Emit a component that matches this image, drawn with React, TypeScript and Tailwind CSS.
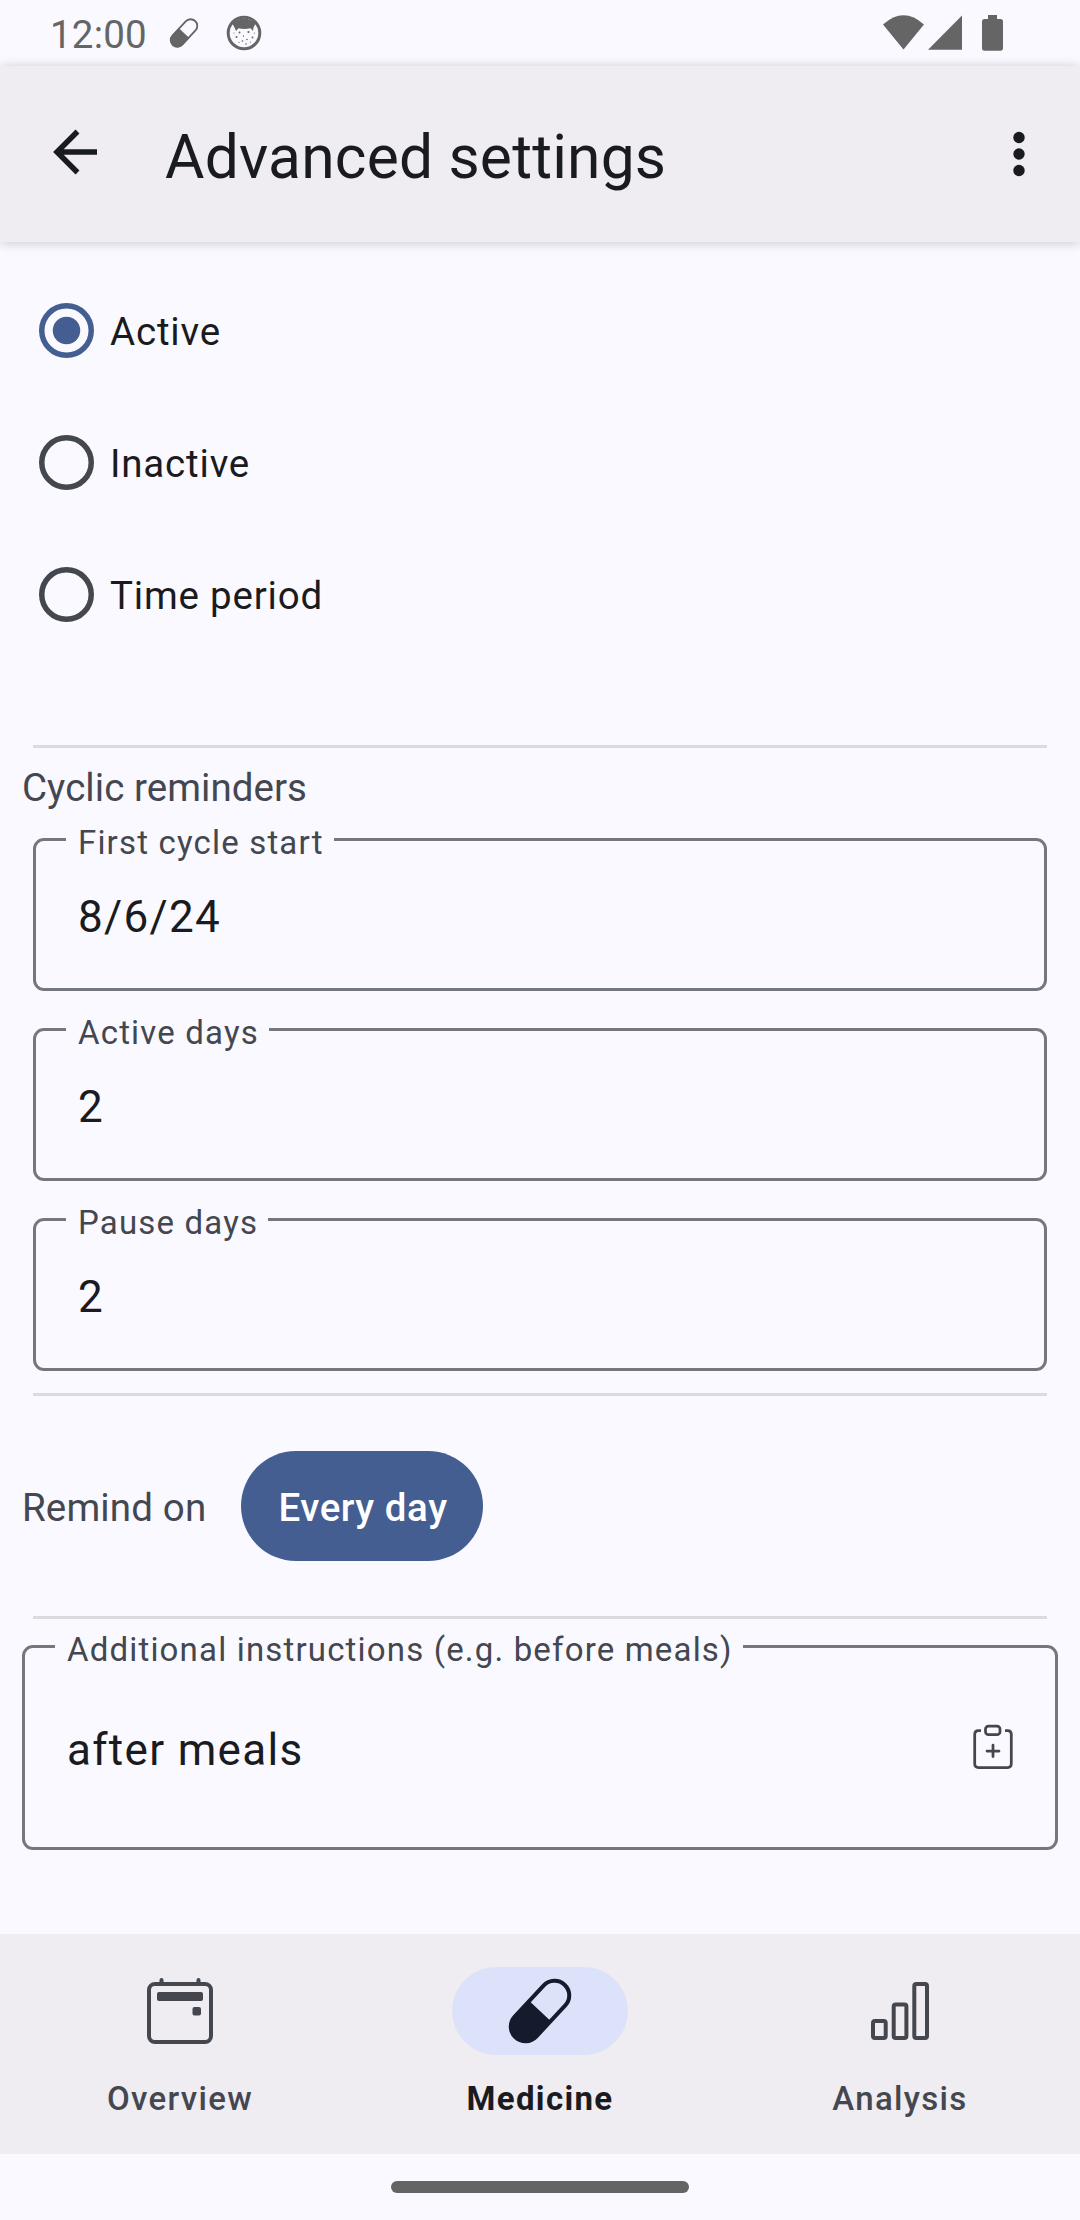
import type { ReactNode } from "react";

function PillIcon({ className }: { className: string }) {
  return (
    <svg viewBox="0 0 66 66" className={className} fill="none">
      <g transform="rotate(-47 33 33)">
        <rect x="-3" y="18.3" width="72" height="29.4" rx="14.7" stroke="currentColor" strokeWidth="4" />
        <path d="M33 17H12a16 16 0 0 0 0 32H33Z" fill="currentColor" />
      </g>
    </svg>
  );
}

function CatIcon() {
  return (
    <svg viewBox="0 0 36 36" className="h-9 w-9">
      <circle cx="18" cy="18" r="15.8" fill="none" stroke="#656565" strokeWidth="3" />
      <path d="M6 8Q17 -1 30 8L27.5 12.5 27 16 24.500 13.2Q18 14.800 12.500 13.200L10 16 8.500 12.500Z" fill="#656565" />
      <g fill="#656565">
        <circle cx="13.500" cy="17.500" r="1" />
        <circle cx="22.500" cy="17" r="1.100" />
        <circle cx="10.500" cy="22" r="1" />
        <circle cx="17.500" cy="21" r=".7" />
        <circle cx="26.500" cy="22.500" r=".9" />
        <circle cx="16.500" cy="26" r=".8" />
        <circle cx="21" cy="24.500" r=".8" />
        <circle cx="8" cy="18" r=".6" />
        <circle cx="28.500" cy="18" r=".6" />
        <circle cx="20" cy="29" r=".8" />
        <circle cx="13" cy="27.500" r=".6" />
        <circle cx="24.500" cy="27" r=".6" />
      </g>
    </svg>
  );
}

function StatusBar() {
  return (
    <div className="flex h-[66px] items-start text-[#656565]">
      <span className="ml-[50px] mt-3 w-[119px] text-[38.500px] leading-[45px] tracking-[0.005em]">12:00</span>
      <PillIcon className="mt-[18px] h-[30px] w-[30px]" />
      <div className="ml-[27px] mt-[15px]">
        <CatIcon />
      </div>
      <svg viewBox="0 0 130 40" className="ml-auto mr-[75px] mt-[14px] h-10 w-[130px]" fill="#656565">
        <path d="M8 10.500Q28.500 -8 49 10.500L28.500 35.500Z" />
        <path d="M53 35.800L87 1.500V35.800Z" />
        <path d="M113 1H122V5H125.500Q128 5 128 7.500V34Q128 36.700 125.500 36.700H109.500Q107 36.700 107 34V7.500Q107 5 109.500 5H113Z" />
      </svg>
    </div>
  );
}

function Radio({ label, checked = false }: { label: string; checked?: boolean }) {
  return (
    <div className="flex h-[132px] items-center">
      <svg viewBox="0 0 55 55" className={"h-[55px] w-[55px] " + (checked ? "text-[#445e91]" : "text-[#44474f]")}>
        <circle cx="27.5" cy="27.5" r="24.75" fill="none" stroke="currentColor" strokeWidth="5.5" />
        {checked && <circle cx="27.5" cy="27.5" r="13.75" fill="currentColor" />}
      </svg>
      <span className="ml-[16.500px] pt-[3px] text-[38.500px] leading-[45px] tracking-[0.021em]">{label}</span>
    </div>
  );
}

function Field({ label, value, tall = false, icon }: { label: string; value: string; tall?: boolean; icon?: ReactNode }) {
  return (
    <div
      className={
        "relative flex items-center justify-between rounded-[11px] border-[3px] border-[#74777f] pl-[42px] " +
        (tall ? "h-[205px]" : "h-[153px]")
      }
    >
      <span className="absolute left-[30px] top-[-17px] bg-[#faf9ff] pl-3 pr-[10px] text-[33px] leading-[38px] tracking-[0.0355em] text-[#44474f]">
        {label}
      </span>
      <span className="pt-[5px] text-[44px] leading-[52px] tracking-[0.03em]">{value}</span>
      {icon}
    </div>
  );
}

function ClipboardIcon() {
  return (
    <svg viewBox="0 0 40 46" className="mb-[2px] mr-[42px] h-[46px] w-10" fill="none" stroke="#44474f" strokeWidth="2.750" strokeLinecap="round">
      <path d="M8 6.500H5.500Q1.700 6.500 1.700 10.500V39.500Q1.700 43.500 5.500 43.500H34.500Q38.300 43.500 38.300 39.500V10.500Q38.300 6.500 34.500 6.500H32" strokeLinecap="butt" />
      <rect x="12.500" y="2" width="14.500" height="8.700" rx="3" />
      <path d="M20 21V32.500M14 27H26" />
    </svg>
  );
}

function Divider() {
  return <div className="mx-[33px] h-[3px] bg-[#dadadf]" />;
}

function NavItem({ label, active = false, children }: { label: string; active?: boolean; children: ReactNode }) {
  return (
    <div className="flex flex-1 flex-col items-center pt-[33px]">
      <div
        className={
          "flex h-[88px] w-[176px] items-center justify-center rounded-full " +
          (active ? "bg-[#dce2f9] text-[#151b2c]" : "text-[#44474f]")
        }
      >
        {children}
      </div>
      <span
        className={
          "mt-[25px] text-[33px] leading-[38px] tracking-[0.04em] " +
          (active ? "font-bold text-[#1a1b20]" : "font-medium text-[#44474f]")
        }
      >
        {label}
      </span>
    </div>
  );
}

export default function App() {
  return (
    <div className="flex h-[2220px] w-[1080px] flex-col overflow-hidden bg-[#faf9ff] font-['Roboto',sans-serif] text-[#1a1b20]">
      <StatusBar />
      <header className="flex h-[176px] shrink-0 items-center bg-[#efedf1] shadow-[0_1px_11px_rgba(0,0,0,0.2)]">
        <svg viewBox="0 0 44 44" className="ml-[53px] h-11 w-11 overflow-visible" fill="none" stroke="#1a1b20" strokeWidth="5.500">
          <path d="M44 20H5M24.500 -.500L4 20 24.500 40.500" />
        </svg>
        <h1 className="ml-[68px] pt-[6px] text-[60.500px] leading-[71px] tracking-[0.2px]">Advanced settings</h1>
        <svg viewBox="0 0 12 46" className="ml-auto mr-[55px] h-[46px] w-3" fill="#1a1b20">
          <circle cx="6" cy="6.500" r="5.700" />
          <circle cx="6" cy="23" r="5.700" />
          <circle cx="6" cy="39.500" r="5.700" />
        </svg>
      </header>

      <main className="flex h-[1692px] flex-col">
        <div className="mb-[85px] mt-[22px] pl-[38.500px]">
          <Radio label="Active" checked />
          <Radio label="Inactive" />
          <Radio label="Time period" />
        </div>
        <Divider />
        <div className="ml-[22px] mt-[17px] text-[38.500px] leading-[45px] tracking-[0.05px] text-[#44474f]">
          Cyclic reminders
        </div>
        <div className="mb-[22px] mt-[28px] flex flex-col gap-[37px] px-[33px]">
          <Field label="First cycle start" value="8/6/24" />
          <Field label="Active days" value="2" />
          <Field label="Pause days" value="2" />
        </div>
        <Divider />
        <div className="my-[55px] flex items-center pl-[22px]">
          <span className="w-[219px] pt-[2px] text-[38.500px] leading-[45px] tracking-[0.15px] text-[#44474f]">Remind on</span>
          <span className="flex h-[110px] w-[242px] items-center justify-center rounded-full bg-[#445e91] pl-[2px] pt-[3px] text-[38.500px] font-medium tracking-[0.55px] text-white">
            Every day
          </span>
        </div>
        <Divider />
        <div className="mt-[26px] px-[22px]">
          <Field label="Additional instructions (e.g. before meals)" value="after meals" tall icon={<ClipboardIcon />} />
        </div>
      </main>

      <nav className="flex h-[220px] shrink-0 bg-[#efedf1]">
        <NavItem label="Overview">
          <svg viewBox="0 0 66 66" className="h-[66px] w-[66px]" fill="none" stroke="currentColor" strokeWidth="4">
            <rect x="2" y="6" width="62" height="58" rx="6" />
            <path d="M14.500 6V2M51.500 6V2" strokeLinecap="round" />
            <rect x="10" y="14" width="46" height="9" rx="2" fill="currentColor" stroke="none" />
            <rect x="45.500" y="29" width="8.500" height="8.500" rx="2" fill="currentColor" stroke="none" />
          </svg>
        </NavItem>
        <NavItem label="Medicine" active>
          <PillIcon className="h-[66px] w-[66px]" />
        </NavItem>
        <NavItem label="Analysis">
          <svg viewBox="0 0 66 66" className="h-[66px] w-[66px]" fill="none" stroke="currentColor" strokeWidth="4">
            <rect x="6" y="43" width="12.700" height="17" rx="2" />
            <rect x="26.700" y="26.500" width="12.700" height="33.500" rx="2" />
            <rect x="47.300" y="6" width="12.700" height="54" rx="2" />
          </svg>
        </NavItem>
      </nav>

      <div className="flex h-[66px] shrink-0 items-center justify-center">
        <div className="h-[11.500px] w-[298px] rounded-full bg-[#646464]" />
      </div>
    </div>
  );
}
